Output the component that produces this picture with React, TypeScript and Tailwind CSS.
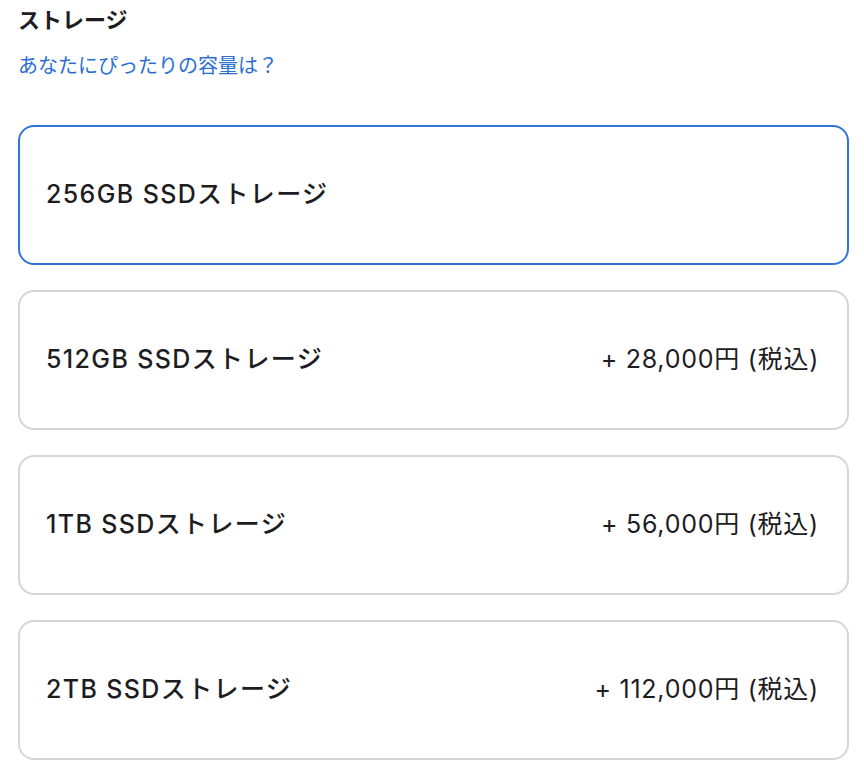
import React from 'react';

const OPTIONS = [
    { id: '256', label: '256GB SSDストレージ', price: '' },
    { id: '512', label: '512GB SSDストレージ', price: '+ 28,000円 (税込)' },
    { id: '1tb', label: '1TB SSDストレージ', price: '+ 56,000円 (税込)' },
    { id: '2tb', label: '2TB SSDストレージ', price: '+ 112,000円 (税込)' },
];

export default function App() {
    const selected = '256';

    return (
        <div
            className="bg-white min-h-screen px-[18px] pt-[6px] text-[#1d1d1f]"
            style={{ fontFamily: '"Inter", "Noto Sans CJK JP", sans-serif' }}
        >
            {/* Header */}
            <h2 className="text-[22px] font-bold leading-[28px]">ストレージ</h2>
            <a className="block mt-[18px] text-[20px] leading-[28px] text-[#2a6fd1]">
                あなたにぴったりの容量は？
            </a>

            {/* Options */}
            <div className="mt-[45px] flex flex-col gap-[25px] w-[831px]">
                {OPTIONS.map((opt) => {
                    const isSelected = opt.id === selected;
                    return (
                        <button
                            key={opt.id}
                            className={`h-[140px] rounded-[16px] flex items-center justify-between pl-[26px] pr-[28px] text-left bg-white ${
                                isSelected ? 'border-2 border-[#2f74d6]' : 'border-2 border-[#d6d6da]'
                            }`}
                        >
                            <span className="text-[25px] font-medium tracking-[0.055em]">{opt.label}</span>
                            {opt.price && <span className="text-[25px] font-normal tracking-[0.03em]">{opt.price}</span>}
                        </button>
                    );
                })}
            </div>
        </div>
    );
}
